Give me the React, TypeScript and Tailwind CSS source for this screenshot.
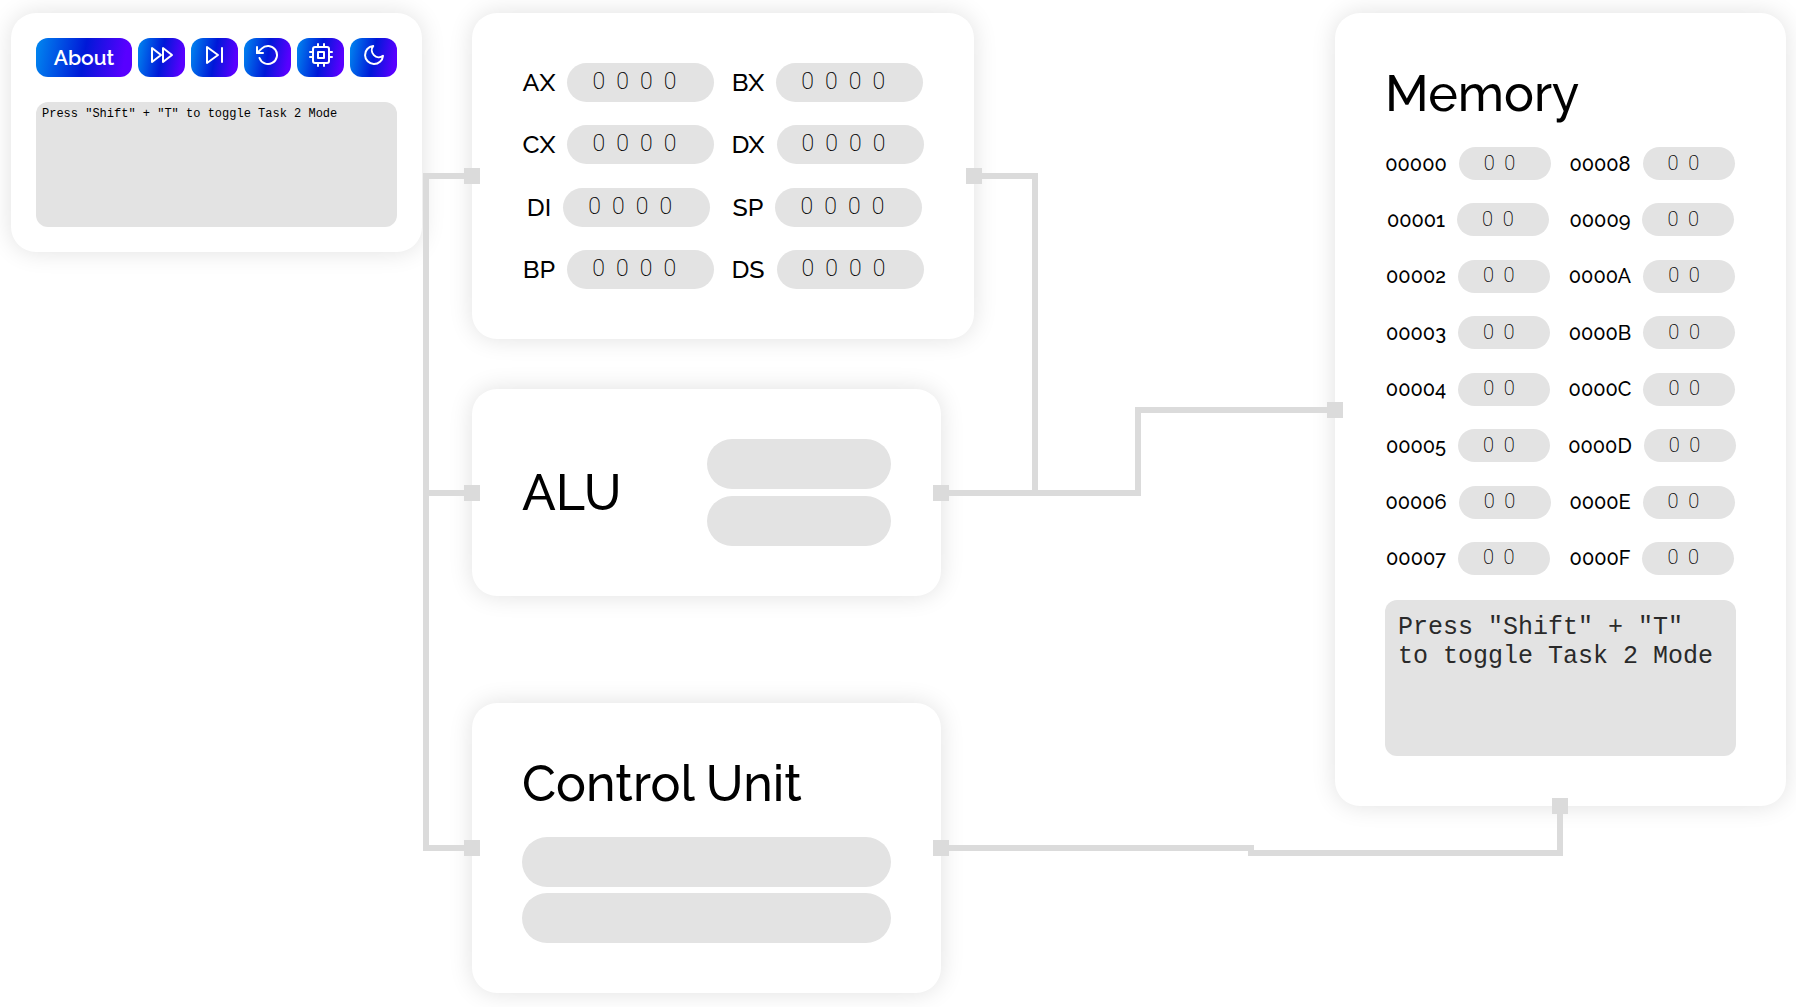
import React, { useLayoutEffect, useRef, useState } from "react";
import type { ReactNode, RefObject } from "react";
import { FiFastForward, FiRotateCcw, FiCpu, FiMoon } from "react-icons/fi";

const registers = ["AX", "BX", "CX", "DX", "DI", "SP", "BP", "DS"];
const addresses = ["0", "1", "2", "3", "4", "5", "6", "7", "8", "9", "A", "B", "C", "D", "E", "F"];
const hint = 'Press "Shift" + "T" to toggle Task 2 Mode';

type Box = { left: number; right: number; top: number; bottom: number; cx: number; cy: number };
type Point = [number, number];

function measure(el: HTMLElement): Box {
  const r = el.getBoundingClientRect();
  const left = r.left + window.scrollX;
  const top = r.top + window.scrollY;
  return {
    left,
    top,
    right: left + r.width,
    bottom: top + r.height,
    cx: Math.floor(left + r.width / 2),
    cy: Math.round(top + r.height / 2),
  };
}

function StepIcon() {
  return (
    <svg viewBox="0 0 24 24" className="size-6" fill="none" stroke="currentColor" strokeWidth="2" strokeLinecap="round" strokeLinejoin="round" aria-hidden="true">
      <path d="M4 4l11 8-11 8z" />
      <path d="M19 5v14" />
    </svg>
  );
}

function Card({ innerRef, className, children }: { innerRef?: RefObject<HTMLElement | null>; className: string; children: ReactNode }) {
  return (
    <section ref={innerRef} className={`rounded-[25px] bg-white shadow-[0_0_25px_rgba(0,0,0,0.12)] ${className}`}>
      {children}
    </section>
  );
}

const gradient =
  "h-[39px] rounded-xl bg-[linear-gradient(100deg,#0088f0_0%,#0018d8_50%,#5800ff_90%)] text-white cursor-pointer";

function IconButton({ label, children }: { label: string; children: ReactNode }) {
  return (
    <button type="button" aria-label={label} className={`flex w-[47px] justify-center pt-[5px] ${gradient}`}>
      {children}
    </button>
  );
}

function Register({ name }: { name: string }) {
  return (
    <div className="flex items-center justify-center gap-3">
      <label htmlFor={`reg-${name}`} className="text-[25px] leading-[29px]">
        {name}
      </label>
      <input
        id={`reg-${name}`}
        readOnly
        value="0  0  0  0"
        className="h-[39px] w-[147px] rounded-full bg-[#e3e3e3] pb-0.5 pl-[25px] font-[Roboto,sans-serif] text-[23px] font-extralight normal-nums outline-none"
      />
    </div>
  );
}

function MemoryCell({ address }: { address: string }) {
  return (
    <div className="flex items-center justify-center gap-3">
      <label htmlFor={`mem-${address}`} className="text-[20px] leading-6">
        {address}
      </label>
      <input
        id={`mem-${address}`}
        readOnly
        value="0  0"
        className="h-[33px] w-[92px] rounded-full bg-[#e3e3e3] pb-0.5 pl-[25px] font-[Roboto,sans-serif] text-[20px] font-extralight normal-nums outline-none"
      />
    </div>
  );
}

function Slot({ label, className }: { label: string; className: string }) {
  return <input readOnly aria-label={label} className={`block h-[50px] rounded-[25px] bg-[#e3e3e3] px-6 outline-none ${className}`} />;
}

export default function App() {
  const regs = useRef<HTMLElement>(null);
  const alu = useRef<HTMLElement>(null);
  const cu = useRef<HTMLElement>(null);
  const mem = useRef<HTMLElement>(null);
  const [bus, setBus] = useState<{ wires: Point[][]; pins: Point[] }>({ wires: [], pins: [] });

  useLayoutEffect(() => {
    const update = () => {
      if (!regs.current || !alu.current || !cu.current || !mem.current) return;
      const r = measure(regs.current);
      const a = measure(alu.current);
      const c = measure(cu.current);
      const m = measure(mem.current);
      const trunk = r.left - 46;
      const mid = Math.round((a.right + m.left) / 2);
      const step = Math.round((c.right + m.cx) / 2);
      setBus({
        wires: [
          [[r.left, r.cy], [trunk, r.cy], [trunk, c.cy], [c.left, c.cy]],
          [[a.left, a.cy], [trunk, a.cy]],
          [[r.right, r.cy], [r.right + 61, r.cy], [r.right + 61, a.cy]],
          [[a.right, a.cy], [mid, a.cy], [mid, m.cy], [m.left, m.cy]],
          [[c.right, c.cy], [step, c.cy], [step, c.cy + 5], [m.cx, c.cy + 5], [m.cx, m.bottom]],
        ],
        pins: [
          [r.left, r.cy], [r.right, r.cy], [a.left, a.cy], [a.right, a.cy],
          [c.left, c.cy], [c.right, c.cy], [m.left, m.cy], [m.cx, m.bottom],
        ],
      });
    };
    update();
    document.fonts?.ready.then(update);
    window.addEventListener("resize", update);
    return () => window.removeEventListener("resize", update);
  }, []);

  return (
    <main className="relative flex min-h-screen items-start bg-white px-[10px] pt-[13px] pb-[14px] font-[Raleway,Lato,sans-serif] font-medium text-black oldstyle-nums">
      <Card className="ml-px w-[411px] shrink-0 p-[25px]">
        <div className="flex gap-1.5">
          <button type="button" className={`flex-1 text-[21px] font-semibold ${gradient}`}>
            About
          </button>
          <IconButton label="Run"><FiFastForward className="size-6" /></IconButton>
          <IconButton label="Step"><StepIcon /></IconButton>
          <IconButton label="Reset"><FiRotateCcw className="size-6" /></IconButton>
          <IconButton label="Processor"><FiCpu className="size-6" /></IconButton>
          <IconButton label="Dark mode"><FiMoon className="size-6" /></IconButton>
        </div>
        <textarea
          aria-label="Program"
          readOnly
          value={hint}
          className="mt-[25px] block h-[125px] w-full resize-none rounded-xl bg-[#e3e3e3] px-1.5 py-[5px] font-['Liberation_Mono',monospace] text-[12px] leading-[14px] font-normal outline-none"
        />
      </Card>

      <div className="ml-[50px] flex shrink-0 flex-col items-start">
        <Card innerRef={regs} className="w-[502px] p-[50px]">
          <div className="grid min-h-[226px] grid-cols-[193px_193px] content-between justify-between">
            {registers.map((name) => (
              <Register key={name} name={name} />
            ))}
          </div>
        </Card>

        <Card innerRef={alu} className="mt-[50px] flex w-[469px] items-center justify-between p-[50px]">
          <h2 className="text-[50px] leading-[61px]">ALU</h2>
          <div className="flex flex-col gap-[7px]">
            <Slot label="ALU operand A" className="w-[184px]" />
            <Slot label="ALU operand B" className="w-[184px]" />
          </div>
        </Card>

        <Card innerRef={cu} className="mt-[107px] w-[469px] p-[50px]">
          <h2 className="text-[50px] leading-[61px]">Control Unit</h2>
          <div className="mt-[23px] flex flex-col gap-1.5">
            <Slot label="Instruction" className="w-full" />
            <Slot label="Operand" className="w-full" />
          </div>
        </Card>
      </div>

      <Card innerRef={mem} className="ml-auto w-[451px] shrink-0 p-[50px]">
        <h2 className="text-[50px] leading-[61px]">Memory</h2>
        <div className="mt-[23px] grid min-h-[428px] grid-flow-col grid-cols-[166px_168px] grid-rows-[repeat(8,auto)] content-between justify-between">
          {addresses.map((a) => (
            <MemoryCell key={a} address={`0000${a}`} />
          ))}
        </div>
        <textarea
          aria-label="Memory notes"
          readOnly
          value={hint}
          className="mt-[25px] block h-[156px] w-full resize-none rounded-xl bg-[#e3e3e3] p-[13px] font-['Liberation_Mono',monospace] text-[25px] leading-[29px] font-normal text-[#2a2a2a] outline-none"
        />
      </Card>

      <svg className="pointer-events-none absolute inset-0 size-full" aria-hidden="true">
        {bus.wires.map((points, i) => (
          <polyline key={i} points={points.map((p) => p.join(",")).join(" ")} fill="none" stroke="#dbdbdb" strokeWidth="6" />
        ))}
        {bus.pins.map(([x, y], i) => (
          <rect key={i} x={x - 8} y={y - 8} width="16" height="16" fill="#dbdbdb" />
        ))}
      </svg>
    </main>
  );
}
